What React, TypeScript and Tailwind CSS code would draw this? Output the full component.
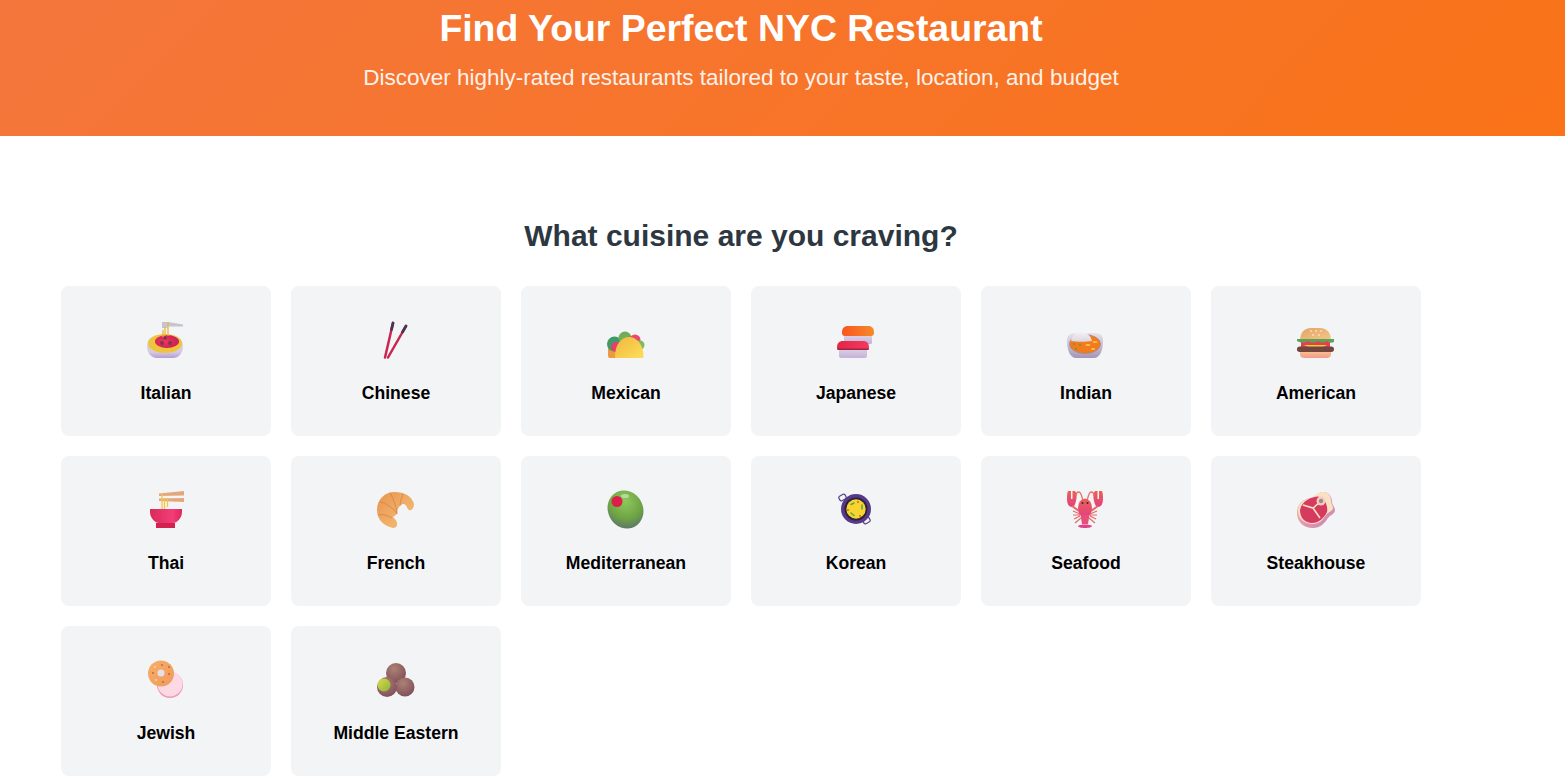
const Pasta = () => (
  <svg viewBox="0 0 40 40" className="w-10 h-10">
    <defs>
      <linearGradient id="pastaBowl" x1="0" y1="0" x2="0" y2="1"><stop offset="0" stopColor="#e4e1ea" /><stop offset="0.75" stopColor="#d2cae0" /><stop offset="1" stopColor="#b79bd6" /></linearGradient>
      <radialGradient id="pastaSauce" cx="0.4" cy="0.5" r="0.6"><stop offset="0" stopColor="#ef3368" /><stop offset="1" stopColor="#c9204f" /></radialGradient>
    </defs>
    <path d="M16 2h6l15 2.500v2L22 6.500 21 8h-5z" fill="#c8c3cf" />
    <path d="M1 26c0-7 5-11 12-11h11c8 0 13 4 13 11 0 8-5 12-10 12H11C5 38 1 33 1 26z" fill="url(#pastaBowl)" />
    <ellipse cx="19" cy="23.500" rx="17" ry="9.500" fill="#efc43c" />
    <ellipse cx="21" cy="21.500" rx="12" ry="6.500" fill="url(#pastaSauce)" />
    <circle cx="19" cy="18" r="1.500" fill="#6b3a3e" />
    <circle cx="16" cy="23" r="1.900" fill="#7b3a42" />
    <circle cx="24" cy="23" r="1.900" fill="#7b3a42" />
    <path d="M22 2v14M19 7v9M17 10v7" stroke="#e9b93e" strokeWidth="1.300" fill="none" />
  </svg>
)

const Chopsticks = () => (
  <svg viewBox="0 0 40 40" className="w-10 h-10">
    <path d="M9 37.500L17 3" stroke="#c9264f" strokeWidth="2.500" strokeLinecap="round" />
    <path d="M12 37.500L30 6" stroke="#c9264f" strokeWidth="2.500" strokeLinecap="round" />
    <path d="M15.500 9.500L17 3" stroke="#4a3550" strokeWidth="2.800" strokeLinecap="round" />
    <path d="M26.500 12L30 6" stroke="#4a3550" strokeWidth="2.800" strokeLinecap="round" />
  </svg>
)

const Taco = () => (
  <svg viewBox="0 0 40 40" className="w-10 h-10">
    <defs>
      <linearGradient id="tacoShell" x1="0" y1="0" x2="1" y2="1"><stop offset="0" stopColor="#f2b640" /><stop offset="1" stopColor="#fbdf58" /></linearGradient>
    </defs>
    <rect x="2" y="26" width="14" height="12" rx="2" fill="#eb9a42" />
    <circle cx="8.500" cy="24" r="7.500" fill="#3f9a6a" />
    <circle cx="19" cy="18" r="6.500" fill="#6fae58" />
    <circle cx="29" cy="20" r="5.500" fill="#e94a6e" />
    <circle cx="34" cy="25" r="4.500" fill="#7dbb5d" />
    <circle cx="10" cy="27" r="5" fill="#e53f6b" />
    <path d="M9 36.500C9 25 15 17 23 17s14.500 8 14.500 19.500c0 1-.5 1.500-1.500 1.500H10.500C9.500 38 9 37.500 9 36.500z" fill="url(#tacoShell)" />
  </svg>
)

const Sushi = () => (
  <svg viewBox="0 0 40 40" className="w-10 h-10">
    <defs>
      <linearGradient id="riceBody" x1="0" y1="0" x2="0" y2="1"><stop offset="0" stopColor="#dcd3e4" /><stop offset="1" stopColor="#c6b2da" /></linearGradient>
      <linearGradient id="salmon" x1="0" y1="0" x2="1" y2="0"><stop offset="0" stopColor="#f9551f" /><stop offset="1" stopColor="#f68a2a" /></linearGradient>
      <linearGradient id="tuna" x1="0" y1="0" x2="1" y2="0"><stop offset="0" stopColor="#e62445" /><stop offset="1" stopColor="#f33a62" /></linearGradient>
    </defs>
    <rect x="8" y="15" width="28" height="9" rx="1.500" fill="url(#riceBody)" />
    <path d="M6 13c0-5 2-7 6-7h20c4 0 6 2 6 7 0 2-1 3-3 3H9c-2 0-3-1-3-3z" fill="url(#salmon)" />
    <rect x="3" y="28" width="28" height="10" rx="2" fill="url(#riceBody)" />
    <path d="M1 28c0-5 2-7 6-7h20c4 0 6 2 6 7 0 1-1 2-2 2H3c-1 0-2-1-2-2z" fill="url(#tuna)" />
    <path d="M1 28.500h32c0 1-1 1.500-2 1.500H3c-1 0-2-.5-2-1.500z" fill="#9f2440" />
  </svg>
)

const Curry = () => (
  <svg viewBox="0 0 40 40" className="w-10 h-10">
    <defs>
      <linearGradient id="curryDish" x1="0" y1="0" x2="0" y2="1"><stop offset="0" stopColor="#e6e4ea" /><stop offset="1" stopColor="#a596b8" /></linearGradient>
      <linearGradient id="curryRice" x1="0" y1="0" x2="0" y2="1"><stop offset="0" stopColor="#f4f0f4" /><stop offset="1" stopColor="#ddd5e0" /></linearGradient>
    </defs>
    <path d="M1 21c0-6 3-8 9-8h18c6 0 9 2 9 8 0 9-3 17-9 17H10C4 38 1 30 1 21z" fill="url(#curryDish)" />
    <ellipse cx="19" cy="24" rx="15.500" ry="9.500" fill="#f47a1f" stroke="#8f86a0" strokeWidth="0.600" />
    <path d="M5 21c1-5 5-9 10-9 6 0 10 4 11 9-6 1-15 1-21 0z" fill="url(#curryRice)" />
    <circle cx="8" cy="24" r="0.900" fill="#3fa83a" />
    <circle cx="14" cy="25" r="0.900" fill="#3fa83a" />
    <circle cx="10" cy="29" r="0.900" fill="#3fa83a" />
    <ellipse cx="22" cy="25" rx="2.500" ry="0.900" fill="#f9c535" />
    <ellipse cx="29" cy="22" rx="2.500" ry="0.900" fill="#f9c535" />
    <ellipse cx="27" cy="29" rx="2.200" ry="0.900" fill="#f9c535" />
  </svg>
)

const Burger = () => (
  <svg viewBox="0 0 40 40" className="w-10 h-10">
    <defs>
      <linearGradient id="bun" x1="0" y1="0" x2="1" y2="1"><stop offset="0" stopColor="#e3a564" /><stop offset="1" stopColor="#f6c68b" /></linearGradient>
      <linearGradient id="bunBase" x1="0" y1="0" x2="0" y2="1"><stop offset="0" stopColor="#f8c38c" /><stop offset="1" stopColor="#f19b8e" /></linearGradient>
    </defs>
    <path d="M4 21c0-8 4-13 11-13h9c7 0 11 5 11 13z" fill="url(#bun)" />
    <circle cx="15" cy="11" r="0.900" fill="#f8e3c3" />
    <circle cx="20" cy="11" r="0.900" fill="#f8e3c3" />
    <circle cx="25" cy="11" r="0.900" fill="#f8e3c3" />
    <circle cx="17" cy="15" r="0.900" fill="#f8e3c3" />
    <circle cx="23" cy="15" r="0.900" fill="#f8e3c3" />
    <path d="M4 31h31v3c0 3-2 4-5 4H9c-3 0-5-1-5-4z" fill="url(#bunBase)" />
    <rect x="5" y="20" width="29" height="7" fill="#e63f55" />
    <path d="M8 25h23l-6 3H14z" fill="#f4cf2b" />
    <path d="M1 19h37v3c-3 1-5 1-7-1-3 2-6 2-9 0-3 2-7 2-10 0-3 2-7 2-11 0z" fill="#5da354" />
    <rect x="1" y="26.500" width="37" height="5.500" rx="2.700" fill="#72453f" />
  </svg>
)

const Noodles = () => (
  <svg viewBox="0 0 40 40" className="w-10 h-10">
    <defs>
      <linearGradient id="ramenBowl" x1="0" y1="0" x2="1" y2="0"><stop offset="0" stopColor="#d92a5c" /><stop offset="0.7" stopColor="#f33d78" /><stop offset="1" stopColor="#d92a5c" /></linearGradient>
    </defs>
    <path d="M13 3.500L38 1v4.500L13 6zM13 8.500l25-.5v4l-25-1z" fill="#e2a87c" />
    <path d="M16 4v15M18.500 8v11M21.500 8v9" stroke="#f3c545" strokeWidth="1.300" fill="none" />
    <path d="M4 19h32v3c0 6-5 11-9 11H13C9 33 4 28 4 22z" fill="url(#ramenBowl)" />
    <rect x="10" y="33" width="19" height="5" fill="#d42250" />
  </svg>
)

const Croissant = () => (
  <svg viewBox="0 0 40 40" className="w-10 h-10">
    <defs>
      <linearGradient id="crust" x1="0" y1="0" x2="1" y2="1"><stop offset="0" stopColor="#e8944f" /><stop offset="1" stopColor="#f6c27a" /></linearGradient>
    </defs>
    <path d="M17 38C8 36 1 30 1 20 1 9 9 2 19 2c9 0 17 4 19 12 0 4-2 7-5 6-2-1-2-5-5-6-4 0-7 5-7 10l-4 3c2 2 5 5 4 8 0 2-2 3-4 3z" fill="url(#crust)" />
    <path d="M4 12c5 1 13 5 17 12M14 2.500c2 4 6 12 7 21M27 3.500c-1 4-3 8-3 12M2 25c4-1 9 0 14 3" stroke="#d98545" strokeWidth="0.900" fill="none" />
  </svg>
)

const Olive = () => (
  <svg viewBox="0 0 40 40" className="w-10 h-10">
    <defs>
      <radialGradient id="oliveBody" cx="0.6" cy="0.3" r="0.75"><stop offset="0" stopColor="#8fc75e" /><stop offset="0.6" stopColor="#6fa644" /><stop offset="1" stopColor="#5b7468" /></radialGradient>
    </defs>
    <ellipse cx="19.500" cy="19.500" rx="17.500" ry="19.500" transform="rotate(-28 19.500 19.500)" fill="url(#oliveBody)" />
    <ellipse cx="19" cy="6" rx="4" ry="2" fill="#b5dc96" />
    <circle cx="11" cy="11.500" r="5.500" fill="#dc1e4a" />
  </svg>
)

const Paella = () => (
  <svg viewBox="0 0 40 40" className="w-10 h-10">
    <rect x="3" y="5" width="7" height="5" rx="1.500" transform="rotate(-30 6.500 7.500)" fill="none" stroke="#5b3f8c" strokeWidth="1.200" />
    <rect x="27" y="28" width="7" height="5" rx="1.500" transform="rotate(-30 30.500 30.500)" fill="none" stroke="#5b3f8c" strokeWidth="1.200" />
    <circle cx="20" cy="19" r="15" fill="#56398a" />
    <circle cx="20" cy="19" r="11.500" fill="#2e2238" />
    <circle cx="20" cy="19" r="9.700" fill="#f7d52e" />
    <path d="M18 13l-3 1.500M26 15v4M15 23l3 2.500" stroke="#5da354" strokeWidth="1.500" strokeLinecap="round" />
    <circle cx="22" cy="12" r="0.900" fill="#e5483d" />
    <circle cx="12" cy="20" r="0.900" fill="#e5483d" />
    <circle cx="24" cy="26" r="0.900" fill="#e5483d" />
  </svg>
)

const Lobster = () => (
  <svg viewBox="0 0 40 40" className="w-10 h-10">
    <defs>
      <linearGradient id="shell" x1="0" y1="0" x2="0" y2="1"><stop offset="0" stopColor="#ea6158" /><stop offset="1" stopColor="#e4407f" /></linearGradient>
    </defs>
    <path d="M2 1h3v8h1.500V1H9c2 2 2 6 1 10-1 4-2 6-4 6-3 0-5-3-5-8 0-3 0-6 1-8zM36 1h-3v8h-1.500V1H29c-2 2-2 6-1 10 1 4 2 6 4 6 3 0 5-3 5-8 0-3 0-6-1-8z" fill="url(#shell)" />
    <path d="M6 16l7 5M32 16l-7 5" stroke="#e9675f" strokeWidth="2" fill="none" />
    <path d="M17 11c-1-4-2-9-4-9-2 0-3 2-3 4M21 11c1-4 2-9 4-9 2 0 3 2 3 4" stroke="#e9706a" strokeWidth="1.300" fill="none" />
    <path d="M7 21l7 3M7 25l7 0M8 29l6-3M9 33l6-5M31 21l-7 3M31 25l-7 0M30 29l-6-3M29 33l-6-5" stroke="#e5696a" strokeWidth="1.200" fill="none" />
    <ellipse cx="19" cy="18" rx="7" ry="9.500" fill="url(#shell)" />
    <path d="M14.500 25h9l-1.500 9h-6z" fill="#e5507a" />
    <path d="M12 36c2-2 12-2 14 0 0 1-3 2-7 2s-7-1-7-2z" fill="#e23f85" />
    <circle cx="16.500" cy="13" r="1" fill="#3c2430" />
    <circle cx="21.500" cy="13" r="1" fill="#3c2430" />
  </svg>
)

const Steak = () => (
  <svg viewBox="0 0 40 40" className="w-10 h-10">
    <defs>
      <linearGradient id="steakSide" x1="0" y1="0" x2="1" y2="1"><stop offset="0" stopColor="#f6b9a8" /><stop offset="1" stopColor="#c97fb3" /></linearGradient>
    </defs>
    <path d="M27 2c6 0 9 5 9 10 0 3 3 5 3 8 0 4-5 5-7 8-3 5-8 10-15 10C8 38 1 32 1 23 1 13 8 9 14 8c5-1 8-6 13-6z" fill="url(#steakSide)" />
    <path d="M27 2c5 0 8 4 8 9 0 3 2 5 2 7 0 3-5 4-7 7-3 5-7 9-13 9C9 34 2 29 2 21 2 12 9 10 14 8c5-2 8-6 13-6z" fill="#fbe1c4" />
    <path d="M22 6.500C16 7 6 10 4 20c0 8 5 13 12 13 7 0 12-5 15-11 1-4-1-10-4-14z" fill="#d53a5f" />
    <path d="M25 11l-8 7-10-3M17 18l7 10" stroke="#fbe1c4" strokeWidth="1.600" fill="none" />
    <circle cx="25" cy="11" r="4.500" fill="#f3cdbf" />
    <circle cx="25" cy="11" r="2.200" fill="#a8868a" />
  </svg>
)

const Bagel = () => (
  <svg viewBox="0 0 40 40" className="w-10 h-10">
    <defs>
      <linearGradient id="dough" x1="0" y1="0" x2="1" y2="1"><stop offset="0" stopColor="#f7ae67" /><stop offset="1" stopColor="#f29a5c" /></linearGradient>
    </defs>
    <circle cx="24" cy="25" r="13" fill="#ee9ab0" />
    <circle cx="24" cy="24" r="12.500" fill="#fdd9e6" />
    <circle cx="15" cy="13.500" r="13" fill="url(#dough)" />
    <circle cx="15" cy="13" r="3.500" fill="#e6dfe8" />
    <circle cx="9" cy="7" r="0.700" fill="#fff" />
    <circle cx="16" cy="5" r="0.700" fill="#5a3a30" />
    <circle cx="23" cy="7" r="0.700" fill="#5a3a30" />
    <circle cx="7" cy="13" r="0.700" fill="#5a3a30" />
    <circle cx="23" cy="14" r="0.700" fill="#5a3a30" />
    <circle cx="10" cy="20" r="0.700" fill="#fff" />
    <circle cx="17" cy="22" r="0.700" fill="#5a3a30" />
  </svg>
)

const Falafel = () => (
  <svg viewBox="0 0 40 40" className="w-10 h-10">
    <defs>
      <radialGradient id="ball" cx="0.4" cy="0.3" r="0.8"><stop offset="0" stopColor="#ad8173" /><stop offset="1" stopColor="#7b4a57" /></radialGradient>
      <linearGradient id="center" x1="0" y1="0" x2="1" y2="1"><stop offset="0" stopColor="#d8dc45" /><stop offset="1" stopColor="#8fb23c" /></linearGradient>
    </defs>
    <circle cx="20" cy="13" r="10" fill="url(#ball)" />
    <circle cx="29" cy="27" r="9.500" fill="url(#ball)" />
    <circle cx="11" cy="27" r="10" fill="url(#ball)" />
    <circle cx="8" cy="25" r="6.500" fill="url(#center)" />
  </svg>
)

const cuisines = [
  { name: 'Italian', Icon: Pasta },
  { name: 'Chinese', Icon: Chopsticks },
  { name: 'Mexican', Icon: Taco },
  { name: 'Japanese', Icon: Sushi },
  { name: 'Indian', Icon: Curry },
  { name: 'American', Icon: Burger },
  { name: 'Thai', Icon: Noodles },
  { name: 'French', Icon: Croissant },
  { name: 'Mediterranean', Icon: Olive },
  { name: 'Korean', Icon: Paella },
  { name: 'Seafood', Icon: Lobster },
  { name: 'Steakhouse', Icon: Steak },
  { name: 'Jewish', Icon: Bagel },
  { name: 'Middle Eastern', Icon: Falafel },
]

const App = () => {
  return (
    <div className="h-[776px] overflow-hidden bg-white font-['Liberation_Sans',Arial,sans-serif]">
      <header className="h-[136px] bg-[linear-gradient(135deg,#f4763c,#fa7318)] text-white">
        <div className="w-[1482px] text-center">
          <h1 className="pt-[7px] text-[37.4px] leading-[43px] font-bold">Find Your Perfect NYC Restaurant</h1>
          <p className="mt-[15px] text-[22.5px] leading-[26px] opacity-90">
            Discover highly-rated restaurants tailored to your taste, location, and budget
          </p>
        </div>
      </header>
      <main className="w-[1482px] px-[61px] pt-[81px]">
        <h2 className="text-center text-[30px] leading-[38px] font-bold text-[#2d3741]">What cuisine are you craving?</h2>
        <div className="mt-[31px] grid grid-cols-6 gap-5">
          {cuisines.map(({ name, Icon }) => (
            <div key={name} className="h-[150px] rounded-lg bg-gray-100 pt-[34px] flex flex-col items-center">
              <Icon />
              <span className="mt-[23px] text-[17.6px] leading-[20px] font-bold text-black">{name}</span>
            </div>
          ))}
        </div>
      </main>
    </div>
  )
}

export default App
